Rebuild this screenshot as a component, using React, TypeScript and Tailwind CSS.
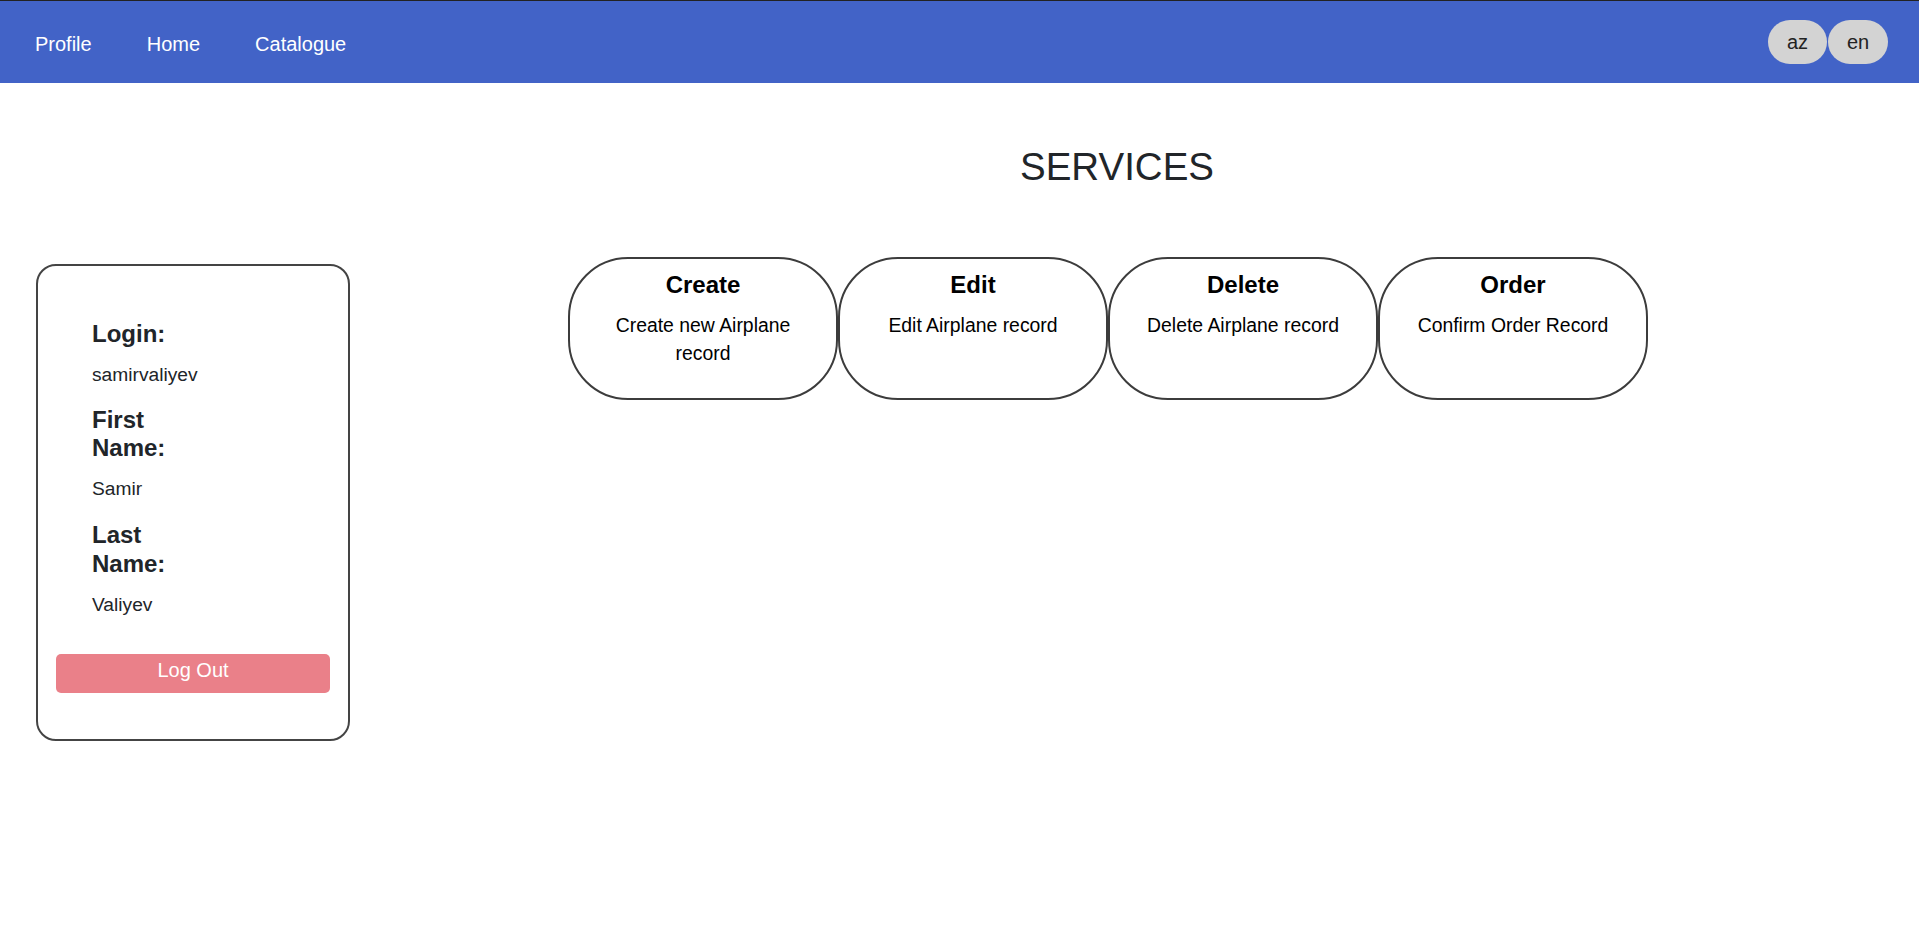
import React from 'react'

const services = [
  { title: 'Create', text: 'Create new Airplane record' },
  { title: 'Edit', text: 'Edit Airplane record' },
  { title: 'Delete', text: 'Delete Airplane record' },
  { title: 'Order', text: 'Confirm Order Record' },
]

const profile = [
  { label: 'Login:', value: 'samirvaliyev' },
  { label: 'First Name:', value: 'Samir' },
  { label: 'Last Name:', value: 'Valiyev' },
]

export default function App() {
  return (
    <div className="min-h-screen bg-white font-['Liberation_Sans',Arial,sans-serif] text-[#212529]">
      <nav className="flex h-[83px] items-center justify-between border-t border-[#222] bg-[#4263c7] pl-[35px] pr-[31px]">
        <div className="flex items-center gap-[55px] pt-[4px] text-[20px] leading-[30px] text-white">
          <a href="#">Profile</a>
          <a href="#">Home</a>
          <a href="#">Catalogue</a>
        </div>
        <div className="flex">
          <button className="h-[44px] w-[59px] rounded-full bg-[#d3d3d3] text-[20px] leading-[30px] text-[#222]">az</button>
          <button className="ml-px h-[44px] w-[60px] rounded-full bg-[#d3d3d3] text-[20px] leading-[30px] text-[#222]">en</button>
        </div>
      </nav>

      <div className="flex">
        <aside className="ml-[36px] mt-[181px] w-[314px] self-start rounded-[20px] border-2 border-[#444] px-[18px] pt-[54px] pb-[46px]">
          {profile.map((p, i) => (
            <div key={p.label} className={i === 0 ? '' : i === 1 ? 'mt-[16px]' : 'mt-[17px]'}>
              <h4 className="ml-[36px] w-[100px] text-[24px] font-bold leading-[1.2]">{p.label}</h4>
              <p className="ml-[36px] mt-[12px] text-[19.2px] leading-[28.8px]">{p.value}</p>
            </div>
          ))}
          <button className="mt-[35px] flex h-[39px] w-full justify-center rounded-[5px] bg-[#ea8089] pt-[1px] text-[20px] leading-[30px] text-white">
            Log Out
          </button>
        </aside>

        <main className="flex-1 pr-[35px]">
          <h1 className="mt-[61px] text-center text-[38.5px] font-normal leading-[1.2]">SERVICES</h1>
          <div className="ml-[218px] mt-[67px] flex">
            {services.map((s) => (
              <div
                key={s.title}
                className="h-[143px] w-[270px] shrink-0 rounded-[60px] border-2 border-[#3c3c3c] px-[24px] pt-[12px] text-center text-black"
              >
                <h3 className="text-[24px] font-bold leading-[1.2]">{s.title}</h3>
                <p className="mt-[11px] text-[19.4px] leading-[28px]">{s.text}</p>
              </div>
            ))}
          </div>
        </main>
      </div>
    </div>
  )
}
